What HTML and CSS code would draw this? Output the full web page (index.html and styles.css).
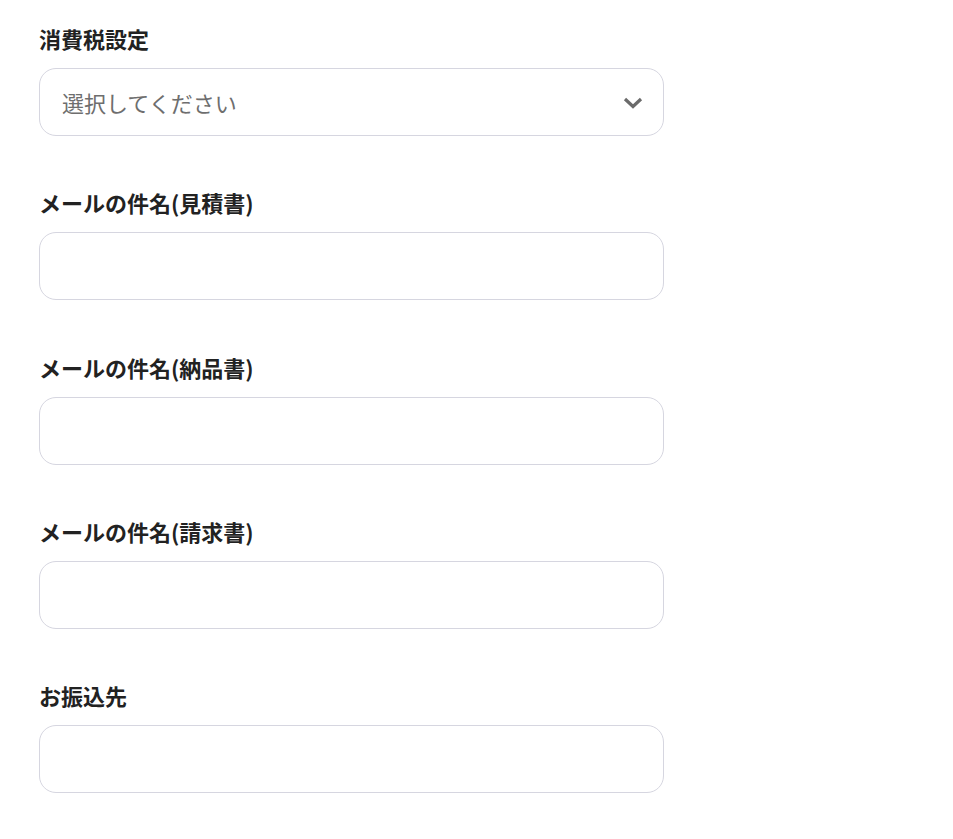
FILE: index.html
```html
<!DOCTYPE html>
<html lang="ja">
  <head>
    <meta charset="UTF-8" />
    <meta name="viewport" content="width=device-width, initial-scale=1.0" />
    <title>設定</title>
    <link rel="stylesheet" href="styles.css">
  </head>
  <body>
    <form class="settings">
      <div class="field">
        <label class="field-label" for="tax">消費税設定</label>
        <div class="select-wrap">
          <select id="tax" class="field-input field-select">
            <option value="">選択してください</option>
            <option value="inclusive">内税</option>
            <option value="exclusive">外税</option>
          </select>
          <svg class="chevron" viewBox="0 0 20 12" width="20" height="12" aria-hidden="true">
            <path d="M2 2 L10 9.5 L18 2" fill="none" stroke="#6b6b6b" stroke-width="3.2" />
          </svg>
        </div>
      </div>

      <div class="field">
        <label class="field-label" for="subject-quote">メールの件名(見積書)</label>
        <input id="subject-quote" class="field-input" type="text" />
      </div>

      <div class="field">
        <label class="field-label" for="subject-delivery">メールの件名(納品書)</label>
        <input id="subject-delivery" class="field-input" type="text" />
      </div>

      <div class="field">
        <label class="field-label" for="subject-invoice">メールの件名(請求書)</label>
        <input id="subject-invoice" class="field-input" type="text" />
      </div>

      <div class="field">
        <label class="field-label" for="bank">お振込先</label>
        <input id="bank" class="field-input" type="text" />
      </div>
    </form>
  </body>
</html>
```

FILE: styles.css
```css
body {
  margin: 0;
  background: #fff;
  font-family: "Noto Sans CJK JP", "Noto Sans", sans-serif;
  color: #222;
}

.settings {
  padding: 26px 0 0 39px;
  width: 625px;
}

.field {
  display: flex;
  flex-direction: column;
  margin-bottom: 54.25px;
}

.field-label {
  font-size: 22px;
  font-weight: 700;
  line-height: 24px;
  margin-bottom: 18px;
  color: #222;
}

.field-input {
  box-sizing: border-box;
  width: 625px;
  height: 68px;
  border: 1px solid #d6d6e0;
  border-radius: 17px;
  background: #fff;
  padding: 0 22px;
  font-family: inherit;
  font-size: 22px;
  color: #222;
  outline: none;
}

.select-wrap {
  position: relative;
}

.field-select {
  appearance: none;
  -webkit-appearance: none;
  color: #6e6e6e;
  cursor: pointer;
}

.chevron {
  position: absolute;
  right: 21px;
  top: 29px;
  pointer-events: none;
}
```
